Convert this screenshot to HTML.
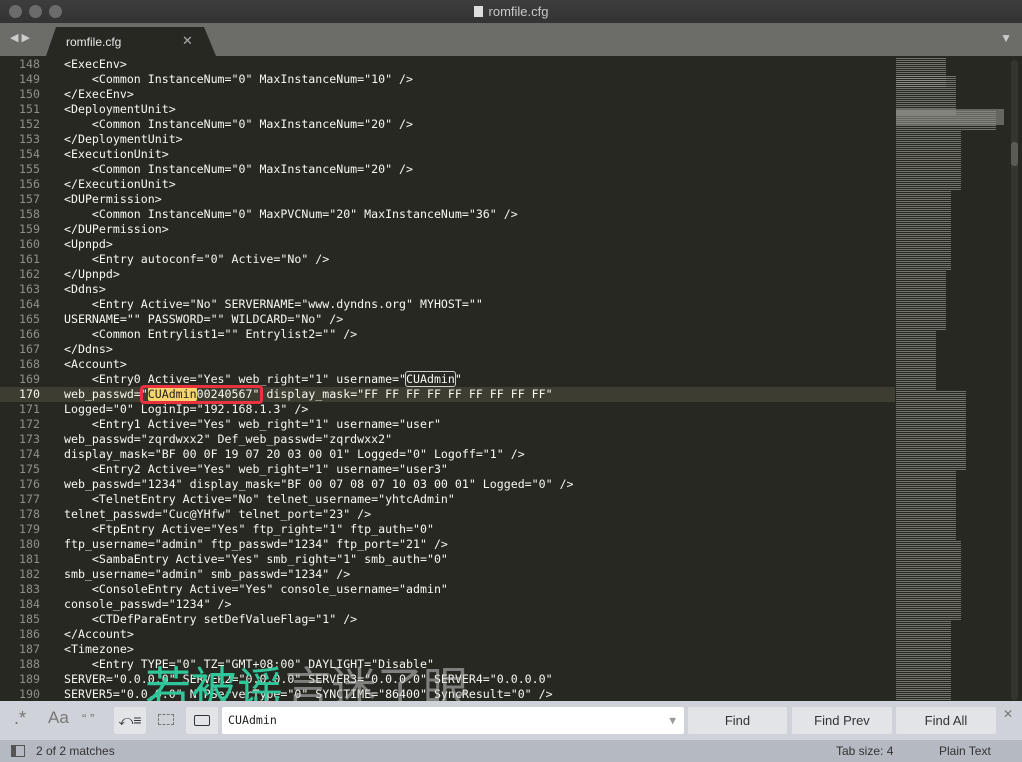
<!DOCTYPE html>
<html><head><meta charset="utf-8"><style>
*{margin:0;padding:0;box-sizing:border-box}
body{width:1022px;height:762px;overflow:hidden;background:#272822;font-family:"Liberation Sans",sans-serif;position:relative}
#title{position:absolute;left:0;top:0;width:1022px;height:23px;background:linear-gradient(#3d3d3d,#333);color:#c8c8c8;font-size:13px;text-align:center;line-height:23px}
.dot{position:absolute;top:5px;width:13px;height:13px;border-radius:50%;background:#6b6b6b}
#tabbar{position:absolute;left:0;top:23px;width:1022px;height:33px;background:#6c6c68}
#tab{position:absolute;left:46px;top:4px;width:170px;height:29px;background:#272822;clip-path:polygon(0 100%,10px 0,158px 0,170px 100%)}
#tab span{position:absolute;left:20px;top:8px;color:#e8e8e8;font-size:12px}
#tab b{position:absolute;left:136px;top:6px;color:#aaa;font-size:13px;font-weight:normal}
#code{position:absolute;left:0;top:56px;width:895px;height:645px;overflow:hidden;font-family:"DejaVu Sans Mono","Liberation Mono",monospace;font-size:11.6px;color:#f8f8f2}
.l{height:15px;line-height:15px;white-space:pre;position:relative}
.n{display:inline-block;width:40px;text-align:right;color:#8f908a;margin-right:24px}
.cur{background:#3e3d32}.cur .n{color:#f8f8f2}
#mini{position:absolute;left:896px;top:56px;width:112px;height:645px}
.mb{position:absolute;left:0;background:repeating-linear-gradient(#9a9a94 0 1px,transparent 1px 2px);opacity:.65}
#sb{position:absolute;left:1011px;top:60px;width:7px;height:640px;background:#34352f;border-radius:3px}
#thumb{position:absolute;left:1011px;top:142px;width:7px;height:24px;background:#5a5b55;border-radius:3px}
#find{position:absolute;left:0;top:701px;width:1022px;height:39px;background:#cfd2d8}
#status{position:absolute;left:0;top:740px;width:1022px;height:22px;background:#b4b9c2;font-size:12px;color:#333;line-height:22px}
.btn{position:absolute;top:6px;height:27px;background:#e2e4e8;border-radius:2px;font-size:13px;color:#333;text-align:center;line-height:27px}
.ic{position:absolute;top:7px;color:#777;font-size:17px}
.wm{position:absolute;font-family:"Noto Sans CJK SC",sans-serif;font-size:46px;line-height:50px}
</style></head><body>
<div id="title"><div class="dot" style="left:9px"></div><div class="dot" style="left:29px"></div><div class="dot" style="left:49px"></div>
<span style="display:inline-block;width:9px;height:11px;background:#ddd;margin-right:6px;vertical-align:-1px"></span>romfile.cfg</div>
<div id="tabbar"><span style="position:absolute;left:10px;top:8px;color:#ccc;font-size:11px">◀ ▶</span>
<div id="tab"><span>romfile.cfg</span><b>✕</b></div>
<span style="position:absolute;right:10px;top:8px;color:#ccc;font-size:12px">▼</span></div>
<div id="code">
<div class="l" style="margin-top:1px"><span class="n">148</span>&lt;ExecEnv&gt;</div>
<div class="l"><span class="n">149</span>    &lt;Common InstanceNum="0" MaxInstanceNum="10" /&gt;</div>
<div class="l"><span class="n">150</span>&lt;/ExecEnv&gt;</div>
<div class="l"><span class="n">151</span>&lt;DeploymentUnit&gt;</div>
<div class="l"><span class="n">152</span>    &lt;Common InstanceNum="0" MaxInstanceNum="20" /&gt;</div>
<div class="l"><span class="n">153</span>&lt;/DeploymentUnit&gt;</div>
<div class="l"><span class="n">154</span>&lt;ExecutionUnit&gt;</div>
<div class="l"><span class="n">155</span>    &lt;Common InstanceNum="0" MaxInstanceNum="20" /&gt;</div>
<div class="l"><span class="n">156</span>&lt;/ExecutionUnit&gt;</div>
<div class="l"><span class="n">157</span>&lt;DUPermission&gt;</div>
<div class="l"><span class="n">158</span>    &lt;Common InstanceNum="0" MaxPVCNum="20" MaxInstanceNum="36" /&gt;</div>
<div class="l"><span class="n">159</span>&lt;/DUPermission&gt;</div>
<div class="l"><span class="n">160</span>&lt;Upnpd&gt;</div>
<div class="l"><span class="n">161</span>    &lt;Entry autoconf="0" Active="No" /&gt;</div>
<div class="l"><span class="n">162</span>&lt;/Upnpd&gt;</div>
<div class="l"><span class="n">163</span>&lt;Ddns&gt;</div>
<div class="l"><span class="n">164</span>    &lt;Entry Active="No" SERVERNAME="www.dyndns.org" MYHOST=""</div>
<div class="l"><span class="n">165</span>USERNAME="" PASSWORD="" WILDCARD="No" /&gt;</div>
<div class="l"><span class="n">166</span>    &lt;Common Entrylist1="" Entrylist2="" /&gt;</div>
<div class="l"><span class="n">167</span>&lt;/Ddns&gt;</div>
<div class="l"><span class="n">168</span>&lt;Account&gt;</div>
<div class="l"><span class="n">169</span>    &lt;Entry0 Active="Yes" web_right="1" username="<span style="outline:1px solid #ccc;border-radius:2px">CUAdmin</span>"</div>
<div class="l cur"><span class="n">170</span>web_passwd="<span style="background:#f5d66e;color:#222;border-radius:2px">CUAdmin</span>00240567" display_mask="FF FF FF FF FF FF FF FF FF"<span style="position:absolute;left:140px;top:-2px;width:123px;height:19px;border:3px solid #e8333f;border-radius:4px"></span></div>
<div class="l"><span class="n">171</span>Logged="0" LoginIp="192.168.1.3" /&gt;</div>
<div class="l"><span class="n">172</span>    &lt;Entry1 Active="Yes" web_right="1" username="user"</div>
<div class="l"><span class="n">173</span>web_passwd="zqrdwxx2" Def_web_passwd="zqrdwxx2"</div>
<div class="l"><span class="n">174</span>display_mask="BF 00 0F 19 07 20 03 00 01" Logged="0" Logoff="1" /&gt;</div>
<div class="l"><span class="n">175</span>    &lt;Entry2 Active="Yes" web_right="1" username="user3"</div>
<div class="l"><span class="n">176</span>web_passwd="1234" display_mask="BF 00 07 08 07 10 03 00 01" Logged="0" /&gt;</div>
<div class="l"><span class="n">177</span>    &lt;TelnetEntry Active="No" telnet_username="yhtcAdmin"</div>
<div class="l"><span class="n">178</span>telnet_passwd="Cuc@YHfw" telnet_port="23" /&gt;</div>
<div class="l"><span class="n">179</span>    &lt;FtpEntry Active="Yes" ftp_right="1" ftp_auth="0"</div>
<div class="l"><span class="n">180</span>ftp_username="admin" ftp_passwd="1234" ftp_port="21" /&gt;</div>
<div class="l"><span class="n">181</span>    &lt;SambaEntry Active="Yes" smb_right="1" smb_auth="0"</div>
<div class="l"><span class="n">182</span>smb_username="admin" smb_passwd="1234" /&gt;</div>
<div class="l"><span class="n">183</span>    &lt;ConsoleEntry Active="Yes" console_username="admin"</div>
<div class="l"><span class="n">184</span>console_passwd="1234" /&gt;</div>
<div class="l"><span class="n">185</span>    &lt;CTDefParaEntry setDefValueFlag="1" /&gt;</div>
<div class="l"><span class="n">186</span>&lt;/Account&gt;</div>
<div class="l"><span class="n">187</span>&lt;Timezone&gt;</div>
<div class="l"><span class="n">188</span>    &lt;Entry TYPE="0" TZ="GMT+08:00" DAYLIGHT="Disable"</div>
<div class="l"><span class="n">189</span>SERVER="0.0.0.0" SERVER2="0.0.0.0" SERVER3="0.0.0.0" SERVER4="0.0.0.0"</div>
<div class="l"><span class="n">190</span>SERVER5="0.0.0.0" NTPServerType="0" SYNCTIME="86400" SyncResult="0" /&gt;</div>
</div>
<div class="wm" style="left:145px;top:661px;color:#2fc79a">若被谣</div>
<div class="wm" style="left:285px;top:661px;color:rgba(200,200,200,.55)">言迷了眼</div>
<div id="mini">
<div class="mb" style="top:2px;width:50px;height:30px"></div>
<div class="mb" style="top:20px;width:60px;height:40px"></div>
<div class="mb" style="top:55px;width:100px;height:20px"></div>
<div style="position:absolute;left:0;top:53px;width:108px;height:16px;background:#8f8f8a;opacity:.6"></div>
<div class="mb" style="top:75px;width:65px;height:60px"></div>
<div class="mb" style="top:135px;width:55px;height:80px"></div>
<div class="mb" style="top:215px;width:50px;height:60px"></div>
<div class="mb" style="top:275px;width:40px;height:60px"></div>
<div class="mb" style="top:335px;width:70px;height:80px"></div>
<div class="mb" style="top:415px;width:60px;height:70px"></div>
<div class="mb" style="top:485px;width:65px;height:80px"></div>
<div class="mb" style="top:565px;width:55px;height:80px"></div>
</div>
<div id="sb"></div><div id="thumb"></div>
<div id="find">
<span class="ic" style="left:14px;font-size:18px">.*</span>
<span class="ic" style="left:48px">Aa</span>
<span class="ic" style="left:82px;font-size:13px;top:10px">“ ”</span>
<div style="position:absolute;left:114px;top:6px;width:32px;height:27px;background:#e2e4e8;border-radius:2px;text-align:center;line-height:27px;color:#333;font-size:14px">⤺≡</div>
<span style="position:absolute;left:158px;top:13px;width:16px;height:11px;border:1px dashed #777"></span>
<div style="position:absolute;left:186px;top:6px;width:32px;height:27px;background:#e2e4e8;border-radius:2px"><span style="position:absolute;left:8px;top:8px;width:16px;height:11px;border:1.5px solid #333;border-radius:2px"></span></div>
<div style="position:absolute;left:222px;top:6px;width:462px;height:27px;background:#fff;border-radius:2px;font-family:'DejaVu Sans Mono',monospace;font-size:11.6px;line-height:27px;padding-left:6px;color:#222">CUAdmin<span style="position:absolute;right:8px;color:#999;font-size:11px">▼</span></div>
<div class="btn" style="left:688px;width:99px">Find</div>
<div class="btn" style="left:792px;width:100px">Find Prev</div>
<div class="btn" style="left:896px;width:100px">Find All</div>
<span style="position:absolute;left:1003px;top:6px;color:#777;font-size:12px">✕</span>
</div>
<div id="status"><span style="position:absolute;left:11px;top:5px;width:14px;height:12px;border:1.5px solid #555;border-left-width:5px"></span><span style="position:absolute;left:36px">2 of 2 matches</span><span style="position:absolute;left:836px">Tab size: 4</span><span style="position:absolute;left:939px">Plain Text</span></div>
</body></html>
